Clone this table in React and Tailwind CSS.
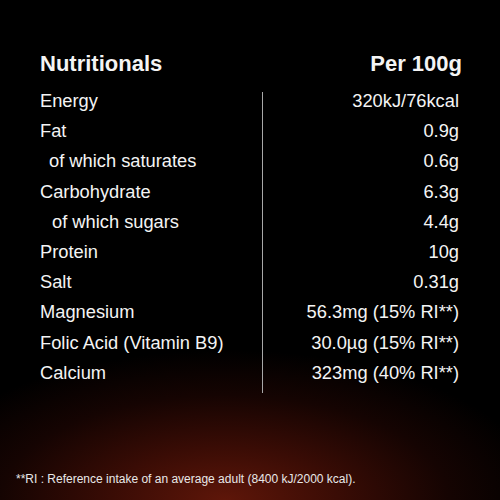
import React from 'react';

const rows = [
  { label: 'Energy', value: '320kJ/76kcal' },
  { label: 'Fat', value: '0.9g' },
  { label: 'of which saturates', value: '0.6g', indent: 'pl-[9px]' },
  { label: 'Carbohydrate', value: '6.3g' },
  { label: 'of which sugars', value: '4.4g', indent: 'pl-[12px]' },
  { label: 'Protein', value: '10g' },
  { label: 'Salt', value: '0.31g' },
  { label: 'Magnesium', value: '56.3mg (15% RI**)' },
  { label: 'Folic Acid (Vitamin B9)', value: '30.0µg (15% RI**)' },
  { label: 'Calcium', value: '323mg (40% RI**)' },
];

const App = () => {
  return (
    <div
      className="w-[500px] h-[500px] bg-black bg-[radial-gradient(ellipse_320px_150px_at_45%_100%,#5e1609_0%,#3a0c05_35%,#150402_70%,#000000_100%)] text-[#f4f4f4] flex flex-col overflow-hidden"
      style={{ fontFamily: '"Liberation Sans", Arial, sans-serif' }}
    >
      <div className="pl-[40px] pr-[38px] pt-[49px]">
        <div className="flex justify-between items-center h-[30px] text-[22px] font-bold leading-[30px]">
          <span>Nutritionals</span>
          <span>Per 100g</span>
        </div>
      </div>

      <div className="flex pl-[40px] pr-[41px] mt-[7px] text-[18.3px]">
        <div className="w-[222px] flex flex-col">
          {rows.map((r) => (
            <div key={r.label} className={`h-[30.2px] leading-[30.2px] whitespace-nowrap ${r.indent || ''}`}>
              {r.label}
            </div>
          ))}
        </div>
        <div className="w-px bg-[#a8a8a8] h-[301px] mt-[6px]" />
        <div className="flex-1 flex flex-col items-end">
          {rows.map((r) => (
            <div key={r.label} className="h-[30.2px] leading-[30.2px] whitespace-nowrap">
              {r.value}
            </div>
          ))}
        </div>
      </div>

      <div className="mt-auto pl-[16px] pb-[12px] text-[12px] text-[#e8e8e8]">
        **RI : Reference intake of an average adult (8400 kJ/2000 kcal).
      </div>
    </div>
  );
};

export default App;
